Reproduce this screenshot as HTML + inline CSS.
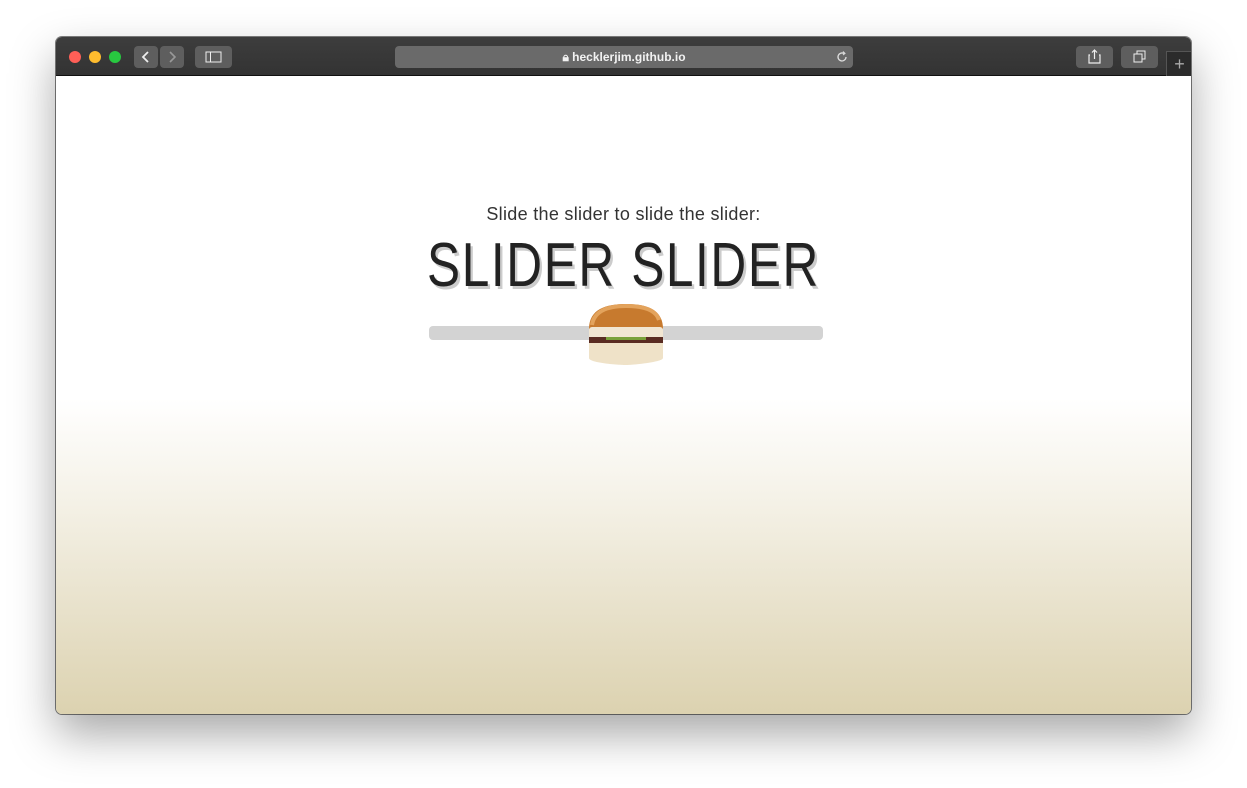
<!DOCTYPE html>
<html><head><style>
body{margin:0;width:1247px;height:788px;background:#fff;position:relative;overflow:hidden;font-family:"Liberation Sans",sans-serif}
.win{position:absolute;left:56px;top:37px;width:1135px;height:677px;border-radius:6px;overflow:hidden;box-shadow:0 20px 45px rgba(0,0,0,.35),0 0 0 1px rgba(0,0,0,.5)}
.bar{position:absolute;left:0;top:0;width:100%;height:38px;background:linear-gradient(#3d3d3d,#333);border-bottom:1px solid #111}
.dot{position:absolute;top:14px;width:12px;height:12px;border-radius:50%}
.btn{position:absolute;top:9px;height:22px;background:#5e5e5e;border-radius:4px}
.content{position:absolute;left:0;top:39px;width:100%;height:638px;background:linear-gradient(#fff 0,#fff 323px,#f5f2e8 420px,#dcd2b0 638px)}
.sub{position:absolute;left:0;width:100%;top:129px;line-height:1;text-align:center;font-size:18px;letter-spacing:0.3px;color:#333}
.h{position:absolute;left:0;width:100%;top:159px;line-height:1;text-align:center;font-size:62px;color:#222;letter-spacing:2px;text-shadow:3px 3px 0 #ccc;transform:scaleX(0.8)}
.track{position:absolute;left:373px;top:250px;width:394px;height:14px;background:#d3d3d3;border-radius:4px}
</style></head><body>
<div class="win">
 <div class="bar">
  <div class="dot" style="left:13px;background:#fe5f57"></div>
  <div class="dot" style="left:33px;background:#febc2e"></div>
  <div class="dot" style="left:53px;background:#28c840"></div>
  <div class="btn" style="left:78px;width:24px"><svg width="24" height="22"><path d="M14 6l-5 5 5 5" stroke="#eee" stroke-width="1.8" fill="none"/></svg></div>
  <div class="btn" style="left:104px;width:24px"><svg width="24" height="22"><path d="M10 6l5 5-5 5" stroke="#999" stroke-width="1.6" fill="none"/></svg></div>
  <div class="btn" style="left:139px;width:37px"><svg width="37" height="22"><rect x="11" y="6" width="15" height="10" stroke="#eee" fill="none"/><line x1="15.5" y1="6" x2="15.5" y2="16" stroke="#eee"/></svg></div>
  <div class="btn" style="left:339px;width:458px;background:#6a6a6a;color:#f2f2f2;font-size:12px;font-weight:bold;text-align:center;line-height:22px">🔒︎ hecklerjim.github.io<svg style="position:absolute;right:4px;top:4px" width="14" height="14"><path d="M11 7a4 4 0 1 1-2-3.5" stroke="#ddd" stroke-width="1.3" fill="none"/><path d="M8 1.5l2 2-2 1.5" stroke="#ddd" fill="none"/></svg></div>
  <div class="btn" style="left:1020px;width:37px"><svg width="37" height="22"><path d="M14 9h-1v8h11V9h-1M18.5 13V4M16 6.5l2.5-2.5 2.5 2.5" stroke="#eee" stroke-width="1.2" fill="none"/></svg></div>
  <div class="btn" style="left:1065px;width:37px"><svg width="37" height="22"><rect x="13" y="8" width="8" height="8" stroke="#eee" fill="none"/><path d="M16 8V5h8v8h-3" stroke="#eee" fill="none"/></svg></div>
  <div style="position:absolute;left:1110px;top:14px;width:25px;height:24px;background:#2b2b2b;border-left:1px solid #555;border-top:1px solid #555;color:#aaa;font-size:18px;text-align:center;line-height:24px">+</div>
 </div>
 <div class="content">
  <div class="sub">Slide the slider to slide the slider:</div>
  <div class="h">SLIDER SLIDER</div>
  <div class="track"></div>
  <svg style="position:absolute;left:530px;top:227px" width="80" height="62">
   <path d="M3 26C3 6 20 1 40 1s37 5 37 25z" fill="#c77a2e"/>
   <path d="M6 22C8 8 22 3 40 3s30 4 33 14" fill="none" stroke="#e3a35c" stroke-width="4"/>
   <rect x="3" y="24" width="74" height="12" rx="3" fill="#f1e6d2"/>
   <rect x="3" y="34" width="74" height="6" fill="#5a2c22"/>
   <path d="M20 34h40v3H20z" fill="#7aa13a"/>
   <path d="M3 40h74v15c0 4-30 7-37 7S3 60 3 55z" fill="#efe2c8"/>
  </svg>
 </div>
</div>
</body></html>
